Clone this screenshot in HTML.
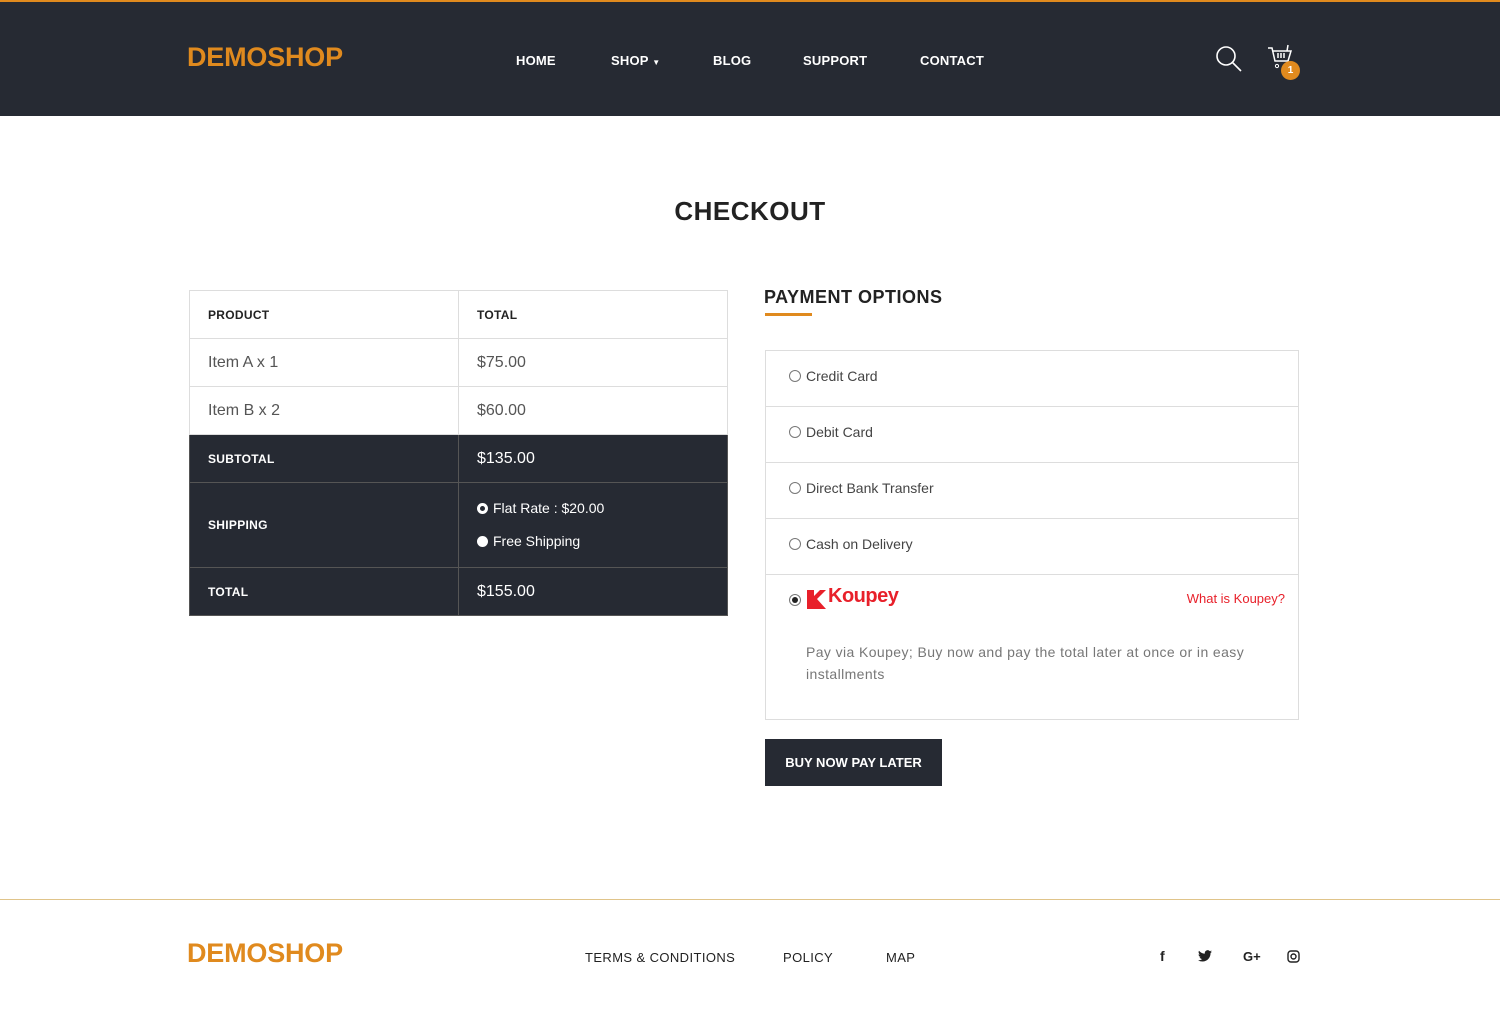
<!DOCTYPE html>
<html><head><meta charset="utf-8"><style>
*{margin:0;padding:0;box-sizing:border-box}
body{width:1500px;height:1013px;background:#fff;font-family:"Liberation Sans",sans-serif;color:#222;position:relative;overflow:hidden}
.hdr{position:absolute;top:0;left:0;width:1500px;height:116px;background:#262a33;border-top:2px solid #e08a1e}
.logo{position:absolute;font-weight:bold;font-size:27px;color:#e08a1e;letter-spacing:-0.2px}
.nav{position:absolute;top:51px;color:#fff;font-size:13px;font-weight:bold;letter-spacing:0.2px}
.abs{position:absolute}
table{border-collapse:collapse;position:absolute;left:189px;top:290px;width:539px}
td{border:1px solid #ddd;height:48px;padding-left:18px;font-size:15px;color:#555}
tr.h td{font-size:12px;font-weight:bold;color:#222;letter-spacing:0.3px}
tr.d td{background:#262a33;color:#fff;border-color:#555}
tr.d td.l{font-size:12px;font-weight:bold;letter-spacing:0.3px}
.po{position:absolute;left:765px;width:534px;border:1px solid #ddd;border-bottom:none}
.row{height:56px;border-bottom:1px solid #ddd;position:relative;font-size:14px;color:#444}
.row span.r{position:absolute;left:23px;top:19px;width:12px;height:12px;border:1px solid #777;border-radius:50%}
.row span.t{position:absolute;left:40px;top:17px}
.ft a{position:absolute;top:950px;font-size:13px;color:#222;letter-spacing:0.4px}
.rb{display:inline-block;width:11px;height:11px;border-radius:50%;vertical-align:-1px;margin-right:5px}
</style></head><body>
<div class="hdr">
<div class="logo" style="left:187px;top:40px">DEMOSHOP</div>
<div class="nav" style="left:516px">HOME</div>
<div class="nav" style="left:611px">SHOP <span style="font-size:8px">▼</span></div>
<div class="nav" style="left:713px">BLOG</div>
<div class="nav" style="left:803px">SUPPORT</div>
<div class="nav" style="left:920px">CONTACT</div>
<svg class="abs" style="left:1214px;top:42px" width="30" height="30" viewBox="0 0 30 30"><circle cx="12" cy="12" r="9" fill="none" stroke="#fff" stroke-width="1.6"/><path d="M18.5 18.5L27 27" stroke="#fff" stroke-width="1.6"/></svg>
<svg class="abs" style="left:1266px;top:40px" width="30" height="30" viewBox="0 0 30 30"><path d="M2 6h4l3 13h13l3-10H7M12 11v5M15 11v5M18 11v5M22 3l-1 6" fill="none" stroke="#fff" stroke-width="1.5"/><circle cx="11" cy="24" r="1.6" fill="none" stroke="#fff"/><circle cx="20" cy="24" r="1.6" fill="none" stroke="#fff"/></svg>
<div class="abs" style="left:1281px;top:59px;width:19px;height:19px;border-radius:50%;background:#e08a1e;color:#fff;font-size:10px;font-weight:bold;text-align:center;line-height:19px">1</div>
</div>
<div class="abs" style="left:0;width:1500px;top:196px;text-align:center;font-size:26px;font-weight:bold;letter-spacing:0.5px">CHECKOUT</div>
<table>
<tr class="h"><td style="width:269px">PRODUCT</td><td>TOTAL</td></tr>
<tr><td style="font-size:16px">Item A x 1</td><td style="font-size:16px">$75.00</td></tr>
<tr><td style="font-size:16px">Item B x 2</td><td style="font-size:16px">$60.00</td></tr>
<tr class="d"><td class="l">SUBTOTAL</td><td style="font-size:16px">$135.00</td></tr>
<tr class="d"><td class="l" style="height:85px">SHIPPING</td><td style="font-size:14px;line-height:33px"><span class="rb" style="border:3px solid #fff"></span>Flat Rate : $20.00<br><span class="rb" style="background:#fff"></span>Free Shipping</td></tr>
<tr class="d"><td class="l">TOTAL</td><td style="font-size:16px">$155.00</td></tr>
</table>
<div class="abs" style="left:764px;top:287px;font-size:18px;font-weight:bold;letter-spacing:0.5px">PAYMENT OPTIONS</div>
<div class="abs" style="left:765px;top:313px;width:47px;height:3px;background:#e08a1e"></div>
<div class="po" style="top:350px">
<div class="row"><span class="r"></span><span class="t">Credit Card</span></div>
<div class="row"><span class="r"></span><span class="t">Debit Card</span></div>
<div class="row"><span class="r"></span><span class="t">Direct Bank Transfer</span></div>
<div class="row"><span class="r"></span><span class="t">Cash on Delivery</span></div>
<div class="row" style="height:145px"><span class="r" style="top:19px"></span><span class="abs" style="left:26px;top:22px;width:6px;height:6px;border-radius:50%;background:#222"></span>
<svg class="abs" style="left:41px;top:15px" width="20" height="19" viewBox="0 0 20 19"><path d="M0 0h7v6l6-6h6L10 9l9 10H0z" fill="#e8202a"/></svg>
<span class="abs" style="left:62px;top:10px;font-size:20px;font-weight:bold;color:#e8202a;letter-spacing:-0.5px">Koupey</span>
<span class="abs" style="right:13px;top:16px;font-size:13px;color:#e8202a">What is Koupey?</span>
<span class="abs" style="left:40px;top:66px;width:470px;font-size:14px;color:#777;line-height:22px;letter-spacing:0.4px">Pay via Koupey; Buy now and pay the total later at once or in easy installments</span>
</div>
</div>
<div class="abs" style="left:765px;top:739px;width:177px;height:47px;background:#262a33;color:#fff;font-size:13px;font-weight:bold;line-height:47px;text-align:center">BUY NOW PAY LATER</div>
<div class="abs" style="left:0;top:899px;width:1500px;height:1px;background:#e0c48a"></div>
<div class="logo" style="left:187px;top:938px">DEMOSHOP</div>
<div class="ft"><a style="left:585px">TERMS &amp; CONDITIONS</a><a style="left:783px">POLICY</a><a style="left:886px">MAP</a></div>
<div class="abs" style="left:1160px;top:948px;font-size:14px;font-weight:bold">f</div>
<svg class="abs" style="left:1198px;top:950px" width="14" height="12" viewBox="0 0 24 20"><path d="M24 2.4a10 10 0 01-2.8.8A5 5 0 0023.3.5a10 10 0 01-3.1 1.2A4.9 4.9 0 0011.8 6 14 14 0 011.7.9a4.9 4.9 0 001.5 6.6A4.9 4.9 0 011 6.9a4.9 4.9 0 003.9 4.8 5 5 0 01-2.2.1 4.9 4.9 0 004.6 3.4A9.9 9.9 0 010 17.3 14 14 0 007.5 19.5c9 0 14-7.5 14-14v-.6A10 10 0 0024 2.4z" fill="#222"/></svg>
<div class="abs" style="left:1243px;top:949px;font-size:13px;font-weight:bold">G+</div>
<svg class="abs" style="left:1287px;top:950px" width="13" height="13" viewBox="0 0 13 13"><rect x="1" y="1" width="11" height="11" rx="3" fill="none" stroke="#222" stroke-width="1.4"/><circle cx="6.5" cy="6.5" r="2.5" fill="none" stroke="#222" stroke-width="1.4"/></svg>
</body></html>
